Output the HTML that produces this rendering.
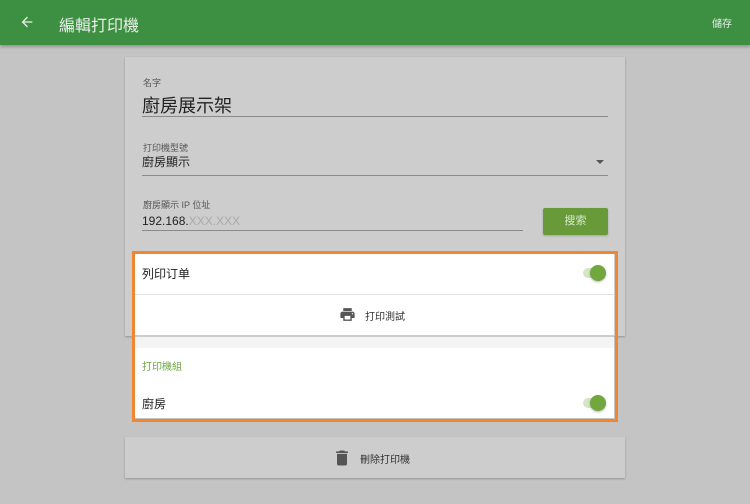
<!DOCTYPE html>
<html><head><meta charset="utf-8"><style>
*{margin:0;padding:0;box-sizing:border-box}
body{width:750px;height:504px;background:#c4c4c4;position:relative;overflow:hidden;font-family:"Liberation Sans","Noto Sans CJK TC",sans-serif;color:#222}
.a{position:absolute}
.hdr{left:0;top:0;width:750px;height:45px;background:#3d8f41;box-shadow:0 2px 3px rgba(0,0,0,.25)}
.card{background:#cdcdcd;box-shadow:0 1px 2px rgba(0,0,0,.25)}
.lbl{font-size:9px;color:#555}
.line{height:1px;background:#8a8a8a}
.tg{width:24px;height:18px}
.tg .tr{position:absolute;left:1px;top:4px;width:19px;height:10px;border-radius:5px;background:#d5e6c6}
.tg .kn{position:absolute;left:8px;top:1px;width:16px;height:16px;border-radius:50%;background:#72a73e;box-shadow:0 1px 2px rgba(0,0,0,.3)}
</style></head><body>
<div class="a hdr"></div>
<svg class="a" style="left:19px;top:14px" width="16" height="16" viewBox="0 0 24 24"><path d="M20 11H7.8l5.6-5.6L12 4l-8 8 8 8 1.4-1.4L7.8 13H20z" fill="#e8f0e8"/></svg>
<div class="a" style="left:59px;top:12px;font-size:16px;color:#e8efe8">編輯打印機</div>
<div class="a" style="left:712px;top:15px;font-size:10px;color:#e8efe8">儲存</div>

<div class="a card" style="left:125px;top:57px;width:500px;height:279px"></div>
<div class="a lbl" style="left:143px;top:76px">名字</div>
<div class="a" style="left:142px;top:92px;font-size:18px;color:#222">廚房展示架</div>
<div class="a line" style="left:142px;top:116px;width:466px"></div>
<div class="a lbl" style="left:143px;top:141px">打印機型號</div>
<div class="a" style="left:142px;top:153px;font-size:12px">廚房顯示</div>
<svg class="a" style="left:596px;top:160px" width="8" height="5"><path d="M0 0h8L4 4z" fill="#555"/></svg>
<div class="a line" style="left:142px;top:175px;width:466px"></div>
<div class="a lbl" style="left:143px;top:198px">廚房顯示 IP 位址</div>
<div class="a" style="left:142px;top:214px;font-size:12px">192.168.<span style="color:#aaa">XXX.XXX</span></div>
<div class="a line" style="left:142px;top:230px;width:381px"></div>
<div class="a" style="left:543px;top:208px;width:65px;height:27px;background:#689a3a;border-radius:2px;color:#d8e8cc;font-size:11px;text-align:center;line-height:27px;box-shadow:0 1px 2px rgba(0,0,0,.2)">搜索</div>

<div class="a" style="left:135px;top:254px;width:479px;height:83px;background:#fff"></div>
<div class="a" style="left:135px;top:294px;width:479px;height:1px;background:#e2e2e2"></div>
<div class="a" style="left:135px;top:335px;width:479px;height:2px;background:#ccc"></div>
<div class="a" style="left:135px;top:337px;width:479px;height:11px;background:#f4f4f4"></div>
<div class="a" style="left:135px;top:348px;width:479px;height:70px;background:#fff"></div>
<div class="a" style="left:142px;top:265px;font-size:12px">列印订单</div>
<div class="a tg" style="left:582px;top:264px"><div class="tr"></div><div class="kn"></div></div>
<svg class="a" style="left:339px;top:306px" width="17" height="17" viewBox="0 0 24 24"><path d="M19 8H5c-1.7 0-3 1.3-3 3v6h4v4h12v-4h4v-6c0-1.7-1.3-3-3-3zm-3 11H8v-5h8v5zm3-7c-.6 0-1-.4-1-1s.4-1 1-1 1 .4 1 1-.4 1-1 1zm-1-9H6v4h12V3z" fill="#555"/></svg>
<div class="a" style="left:365px;top:308px;font-size:10px;color:#333">打印測試</div>
<div class="a" style="left:142px;top:358px;font-size:10px;color:#6ea843">打印機組</div>
<div class="a" style="left:142px;top:395px;font-size:12px">廚房</div>
<div class="a tg" style="left:582px;top:394px"><div class="tr"></div><div class="kn"></div></div>
<div class="a" style="left:132px;top:251px;width:486px;height:171px;border:3px solid #f08532"></div>

<div class="a card" style="left:125px;top:437px;width:500px;height:41px"></div>
<svg class="a" style="left:332px;top:448px" width="20" height="20" viewBox="0 0 24 24"><path d="M6 19c0 1.1.9 2 2 2h8c1.1 0 2-.9 2-2V7H6v12zM19 4h-3.5l-1-1h-5l-1 1H5v2h14V4z" fill="#555"/></svg>
<div class="a" style="left:360px;top:451px;font-size:10px;color:#333">刪除打印機</div>
</body></html>
